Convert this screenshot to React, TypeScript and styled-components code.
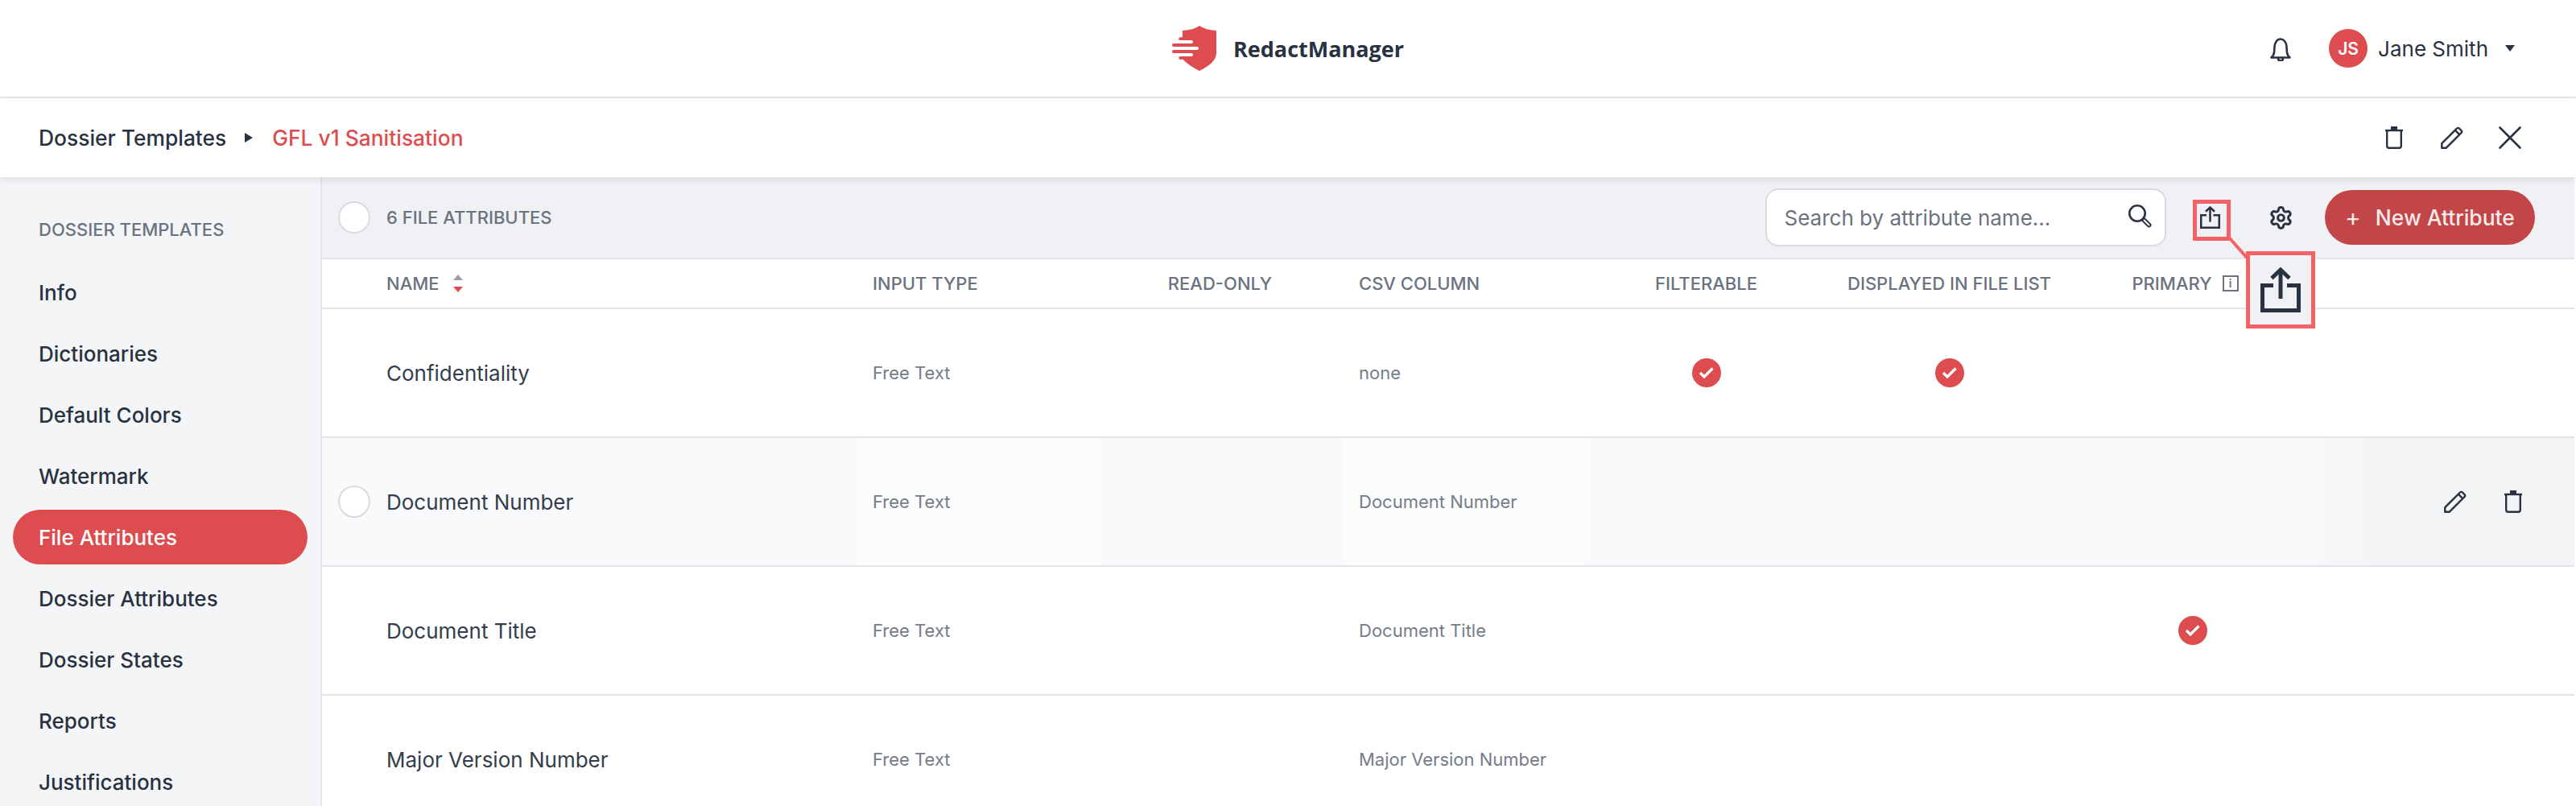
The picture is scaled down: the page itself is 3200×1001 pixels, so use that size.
import React from "react";
import styled, { createGlobalStyle } from "styled-components";
import { Settings } from "lucide-react";

const dark = "#283241";
const red = "#dd4d50";
const marker = "#f46266";

const GlobalStyle = createGlobalStyle`
  html, body {
    margin: 0;
    padding: 0;
    background: #fff;
    font-family: Inter, "Liberation Sans", sans-serif;
    color: ${dark};
  }
  * {
    box-sizing: border-box;
  }
`;

const Page = styled.div`
  position: relative;
  width: 3200px;
  height: 1001px;
  overflow: hidden;
  display: flex;
  flex-direction: column;
  background: #fff;
`;

const TopBar = styled.header`
  flex: none;
  height: 122px;
  border-bottom: 2px solid #e2e4e9;
  display: grid;
  grid-template-columns: 1fr auto 1fr;
  align-items: center;
`;

const Logo = styled.div`
  grid-column: 2;
  display: flex;
  align-items: center;
  gap: 21px;
`;

const LogoText = styled.span`
  font-family: "Open Sans", sans-serif;
  font-weight: 700;
  font-size: 27px;
  color: ${dark};
`;

const UserArea = styled.div`
  justify-self: end;
  display: flex;
  align-items: center;
  padding-right: 76px;
`;

const Avatar = styled.div`
  width: 48px;
  height: 48px;
  border-radius: 50%;
  background: ${red};
  color: #fff;
  font-size: 21px;
  font-weight: 600;
  display: flex;
  align-items: center;
  justify-content: center;
  margin-left: 47px;
  margin-right: 13px;
`;

const UserName = styled.span`
  font-size: 26px;
`;

const Caret = styled.span`
  width: 0;
  height: 0;
  margin-left: 21px;
  border-left: 6px solid transparent;
  border-right: 6px solid transparent;
  border-top: 8px solid ${dark};
`;

const CrumbBar = styled.div`
  flex: none;
  height: 98px;
  display: flex;
  align-items: center;
  justify-content: space-between;
  padding: 0 68px 0 48px;
  position: relative;
  z-index: 2;
  background: #fff;
  box-shadow: 0 4px 8px rgba(40, 50, 65, 0.1);
`;

const Crumbs = styled.div`
  display: flex;
  align-items: center;
  font-size: 26.4px;
  font-weight: 500;
`;

const CrumbArrow = styled.span`
  width: 0;
  height: 0;
  margin: 0 24px 0 23px;
  border-top: 6.5px solid transparent;
  border-bottom: 6.5px solid transparent;
  border-left: 10px solid ${dark};
`;

const CrumbCurrent = styled.span`
  color: ${red};
`;

const CrumbIcons = styled.div`
  display: flex;
  align-items: center;
  gap: 44px;
  & > svg:first-child {
    margin-right: 3px;
  }
`;

const Body = styled.div`
  flex: 1;
  min-height: 0;
  display: flex;
`;

const Sidebar = styled.nav`
  flex: none;
  width: 400px;
  background: #f4f5f7;
  border-right: 2px solid #e2e4e9;
  padding: 16px 16px 0;
  display: flex;
  flex-direction: column;
  gap: 8px;
`;

const SideTitle = styled.div`
  flex: none;
  height: 85px;
  padding: 34px 0 0 32px;
  font-size: 22px;
  line-height: 30px;
  font-weight: 500;
  color: #6b7280;
`;

const SideItem = styled.a<{ $active?: boolean }>`
  flex: none;
  height: 68px;
  border-radius: 34px;
  padding-left: 32px;
  display: flex;
  align-items: center;
  font-size: 26px;
  font-weight: 500;
  color: ${(p) => (p.$active ? "#fff" : dark)};
  background: ${(p) => (p.$active ? red : "transparent")};
`;

const Main = styled.main`
  width: 2798px;
  display: flex;
  flex-direction: column;
  overflow: hidden;
`;

const Toolbar = styled.div`
  flex: none;
  height: 102px;
  background: #f0f1f4;
  border-bottom: 2px solid #e2e4e9;
  display: flex;
  align-items: center;
  padding: 0 49px 0 20px;
`;

const Circle = styled.span`
  flex: none;
  width: 40px;
  height: 40px;
  border-radius: 50%;
  background: #fff;
  border: 2px solid #d9dbe0;
`;

const CountLabel = styled.span`
  margin-left: 20px;
  flex: 1;
  font-size: 22px;
  font-weight: 500;
  color: #6b7280;
`;

const Search = styled.div`
  flex: none;
  width: 498px;
  height: 72px;
  background: #fff;
  border: 2px solid #d9dbe0;
  border-radius: 16px;
  display: flex;
  align-items: center;
  justify-content: space-between;
  padding: 0 16px 0 22px;
  font-size: 26px;
  color: #6b7280;
`;

const ToolIcon = styled.span<{ $left: number }>`
  flex: none;
  display: flex;
  margin-left: ${(p) => p.$left}px;
`;

const NewButton = styled.button`
  flex: none;
  width: 261px;
  height: 68px;
  margin-left: 39.5px;
  border: none;
  border-radius: 34px;
  background: #c24548;
  color: #f6eaea;
  font-family: inherit;
  font-size: 26.4px;
  font-weight: 500;
  display: flex;
  align-items: center;
  padding: 0 0 0 25px;
  gap: 18px;
`;

const Plus = styled.span`
  font-size: 30px;
  font-weight: 400;
  line-height: 1;
`;

const TableRow = styled.div<{ $hover?: boolean }>`
  flex: none;
  height: 160px;
  display: grid;
  grid-template-columns: 664px repeat(6, 302px) 1fr;
  border-bottom: 2px solid #e2e4e9;
  background: ${(p) =>
    p.$hover
      ? "linear-gradient(90deg, #f9fafb calc(100% - 356px), #f3f4f6 calc(100% - 240px))"
      : "#fff"};
`;

const HeadRow = styled(TableRow)`
  height: 62px;
  background: #fff;
`;

const HeadCell = styled.div<{ $center?: boolean; $first?: boolean }>`
  display: flex;
  align-items: center;
  justify-content: ${(p) => (p.$center ? "center" : "flex-start")};
  padding-left: ${(p) => (p.$first ? 80 : p.$center ? 0 : 20)}px;
  padding-right: ${(p) => (p.$center ? 3 : 0)}px;
  font-size: 22px;
  font-weight: 500;
  color: #6b7280;
`;

const Cell = styled.div<{ $center?: boolean; $tint?: boolean }>`
  display: flex;
  align-items: center;
  justify-content: ${(p) => (p.$center ? "center" : "flex-start")};
  padding-left: ${(p) => (p.$center ? 0 : 20)}px;
  padding-right: ${(p) => (p.$center ? 3 : 0)}px;
  font-size: 22px;
  color: #757c89;
  background: ${(p) => (p.$tint ? "#fbfcfc" : "transparent")};
`;

const NameCell = styled.div`
  display: flex;
  align-items: center;
  gap: 20px;
  padding-left: 20px;
  font-size: 26px;
  color: #333d4b;
`;

const NoCircle = styled.span`
  flex: none;
  width: 40px;
`;

const ActionCell = styled.div`
  display: flex;
  align-items: center;
  justify-content: flex-end;
  gap: 47px;
  padding-right: 65px;
`;

const SortArrows = styled.span`
  display: flex;
  flex-direction: column;
  gap: 8px;
  margin-left: 17px;
`;

const SortUp = styled.span`
  border-left: 6px solid transparent;
  border-right: 6px solid transparent;
  border-bottom: 7px solid #9aa0aa;
`;

const SortDown = styled.span`
  border-left: 6px solid transparent;
  border-right: 6px solid transparent;
  border-top: 7px solid ${red};
`;

const InfoBox = styled.span`
  width: 20px;
  height: 20px;
  margin-left: 13px;
  margin-right: 18px;
  border: 2px solid #6b7280;
  font-size: 14px;
  font-weight: 600;
  line-height: 16px;
  text-align: center;
`;

const CheckDot = styled.span`
  width: 36px;
  height: 36px;
  border-radius: 50%;
  background: ${red};
  display: flex;
  align-items: center;
  justify-content: center;
`;

// highlight drawn over the screenshot, not part of the app itself
const Marker = styled.div`
  position: absolute;
  left: 2724px;
  top: 248px;
  width: 47px;
  height: 51px;
  border: 5px solid ${marker};
`;

const Zoomed = styled.div`
  position: absolute;
  left: 2790px;
  top: 312px;
  width: 86px;
  height: 96px;
  background: #f0f1f4;
  border: 5px solid ${marker};
  display: flex;
  align-items: center;
  justify-content: center;
`;

const Connector = styled.svg`
  position: absolute;
  left: 2766px;
  top: 292px;
`;

const BellIcon = () => (
  <svg width="26" height="32" viewBox="0 -3 26 32" fill="none" stroke={dark} strokeWidth="2.6" strokeLinecap="round" strokeLinejoin="round">
    <path d="M1.500 24.500h23c-2.200-2-3.400-4-3.600-7l-.4-6.500C20.200 5.500 17 1.500 13 1.500S5.800 5.500 5.500 11l-.4 6.500c-.2 3-1.400 5-3.600 7z" />
    <path d="M10 25.500c0 4 6 4 6 0" />
  </svg>
);

const TrashIcon = () => (
  <svg width="22" height="28" viewBox="0 0 22 28" fill="none" stroke={dark} strokeWidth="2.4" strokeLinejoin="round">
    <path d="M0 5h22" />
    <rect x="7" y="0" width="8" height="4" fill={dark} stroke="none" />
    <path d="M2.200 5v19.300c0 1.500 1 2.500 2.500 2.500h12.600c1.500 0 2.500-1 2.500-2.500V5" />
  </svg>
);

const PencilIcon = () => (
  <svg width="28" height="28" viewBox="0 0 28 28" fill="none" stroke={dark} strokeWidth="2.4" strokeLinejoin="round">
    <path d="M1.300 26.700v-5.500L20 2.500c.9-.9 2-.9 2.900 0l2.600 2.600c.9.900.9 2 0 2.900L6.800 26.700z" />
    <path d="M17.800 4.700l5.500 5.500" />
  </svg>
);

const CloseIcon = () => (
  <svg width="28" height="28" viewBox="0 0 28 28" fill="none" stroke={dark} strokeWidth="2.6" strokeLinecap="round">
    <path d="M1.500 1.500l25 25M26.500 1.500l-25 25" />
  </svg>
);

const SearchIcon = () => (
  <svg width="30" height="32" viewBox="0 0 30 32" fill="none" stroke={dark} strokeLinecap="round">
    <circle cx="12" cy="11" r="9.700" strokeWidth="2.600" />
    <path d="M20.500 19.500l6 6" strokeWidth="6" />
    <path d="M20.500 19.500l6 6" strokeWidth="1.800" stroke="#fff" />
  </svg>
);

const ShareIcon = ({ w, h }: { w: number; h: number }) => (
  <svg width={w} height={h} viewBox="0 0 50 56" fill="none" stroke={dark} strokeWidth="5">
    <path d="M16 22.500H2.500v31h45v-31H33" />
    <path d="M25 3v36" />
    <path d="M14 13.500L25 3l11 10.500" />
  </svg>
);

const ShieldLogo = () => (
  <svg width="55" height="56" viewBox="0 0 55 56" fill={red}>
    <path d="M34 0c5 3.500 12 5.500 21 6v28c0 9-9 16-21 22-8-4-16-9-21-15V6c9-.5 16-2.500 21-6z" />
    <rect x="8.300" y="14.300" width="10" height="3.800" rx="1.900" />
    <rect x="0" y="22" width="20" height="4" rx="2" />
    <rect x="0" y="30" width="20" height="4" rx="2" />
    <rect x="8.300" y="38" width="10" height="3.800" rx="1.900" />
    <rect x="0" y="18" width="26" height="4" rx="2" fill="#fff" />
    <rect x="0" y="26" width="33" height="4" rx="2" fill="#fff" />
    <rect x="0" y="34" width="26" height="4" rx="2" fill="#fff" />
  </svg>
);

const CheckIcon = () => (
  <svg width="20" height="16" viewBox="0 0 20 16" fill="none" stroke="#fff" strokeWidth="3.200">
    <path d="M2 8l5 5L17.500 2.500" />
  </svg>
);

const navItems = [
  "Info",
  "Dictionaries",
  "Default Colors",
  "Watermark",
  "File Attributes",
  "Dossier Attributes",
  "Dossier States",
  "Reports",
  "Justifications",
];

const rows = [
  { name: "Confidentiality", csv: "none", filterable: true, displayed: true, primary: false },
  { name: "Document Number", csv: "Document Number", filterable: false, displayed: false, primary: false, hover: true },
  { name: "Document Title", csv: "Document Title", filterable: false, displayed: false, primary: true },
  { name: "Major Version Number", csv: "Major Version Number", filterable: false, displayed: false, primary: false },
];

const Check = ({ on }: { on: boolean }) =>
  on ? (
    <CheckDot>
      <CheckIcon />
    </CheckDot>
  ) : null;

export default function App() {
  return (
    <Page>
      <GlobalStyle />
      <TopBar>
        <Logo>
          <ShieldLogo />
          <LogoText>RedactManager</LogoText>
        </Logo>
        <UserArea>
          <BellIcon />
          <Avatar>JS</Avatar>
          <UserName>Jane Smith</UserName>
          <Caret />
        </UserArea>
      </TopBar>
      <CrumbBar>
        <Crumbs>
          Dossier Templates
          <CrumbArrow />
          <CrumbCurrent>GFL v1 Sanitisation</CrumbCurrent>
        </Crumbs>
        <CrumbIcons>
          <TrashIcon />
          <PencilIcon />
          <CloseIcon />
        </CrumbIcons>
      </CrumbBar>
      <Body>
        <Sidebar>
          <SideTitle>DOSSIER TEMPLATES</SideTitle>
          {navItems.map((item) => (
            <SideItem key={item} $active={item === "File Attributes"}>
              {item}
            </SideItem>
          ))}
        </Sidebar>
        <Main>
          <Toolbar>
            <Circle />
            <CountLabel>6 FILE ATTRIBUTES</CountLabel>
            <Search>
              Search by attribute name...
              <SearchIcon />
            </Search>
            <ToolIcon $left={42}>
              <ShareIcon w={25} h={28} />
            </ToolIcon>
            <ToolIcon $left={60}>
              <Settings size={31} color={dark} strokeWidth={2.3} />
            </ToolIcon>
            <NewButton>
              <Plus>+</Plus>
              New Attribute
            </NewButton>
          </Toolbar>
          <HeadRow>
            <HeadCell $first>
              NAME
              <SortArrows>
                <SortUp />
                <SortDown />
              </SortArrows>
            </HeadCell>
            <HeadCell>INPUT TYPE</HeadCell>
            <HeadCell $center>READ-ONLY</HeadCell>
            <HeadCell>CSV COLUMN</HeadCell>
            <HeadCell $center>FILTERABLE</HeadCell>
            <HeadCell $center>DISPLAYED IN FILE LIST</HeadCell>
            <HeadCell $center>
              PRIMARY
              <InfoBox>i</InfoBox>
            </HeadCell>
          </HeadRow>
          {rows.map((row) => (
            <TableRow key={row.name} $hover={row.hover}>
              <NameCell>
                {row.hover ? <Circle /> : <NoCircle />}
                {row.name}
              </NameCell>
              <Cell $tint={row.hover}>Free Text</Cell>
              <Cell $center />
              <Cell $tint={row.hover}>{row.csv}</Cell>
              <Cell $center>
                <Check on={row.filterable} />
              </Cell>
              <Cell $center>
                <Check on={row.displayed} />
              </Cell>
              <Cell $center>
                <Check on={row.primary} />
              </Cell>
              <ActionCell>
                {row.hover && (
                  <>
                    <PencilIcon />
                    <TrashIcon />
                  </>
                )}
              </ActionCell>
            </TableRow>
          ))}
        </Main>
      </Body>
      <Marker />
      <Connector width="30" height="30" viewBox="0 0 30 30" fill="none" stroke={marker} strokeWidth="4">
        <path d="M4 4l21 24" />
      </Connector>
      <Zoomed>
        <ShareIcon w={50} h={56} />
      </Zoomed>
    </Page>
  );
}
